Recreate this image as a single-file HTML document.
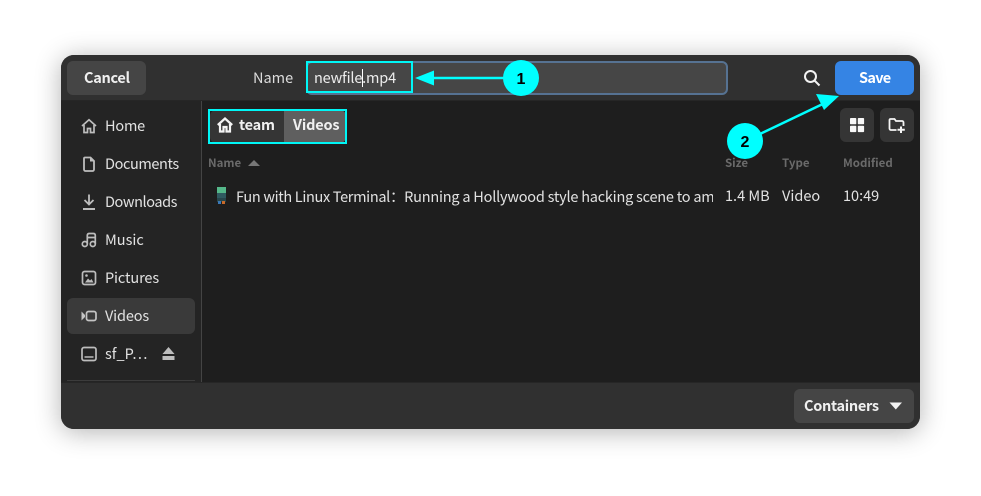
<!DOCTYPE html>
<html><head><meta charset="utf-8">
<style>
html,body{margin:0;padding:0;background:#fff;width:981px;height:496px;overflow:hidden}
body{position:relative;font-family:"Noto Sans CJK SC","Liberation Sans",sans-serif}
.a{position:absolute}
.t{position:absolute;font-size:14.5px;line-height:20px;color:#e2e2e2;white-space:nowrap}
.b{font-weight:700;color:#f0f0f0}
.h{font-size:11.5px;color:#6a6a6a;font-weight:700}
</style></head><body>
<div class="a" style="left:61px;top:55px;width:859px;height:374px;border-radius:13px;background:#1e1e1e;overflow:hidden;box-shadow:0 3px 26px rgba(0,0,0,.3)">
  <div class="a" style="left:0;top:0;width:859px;height:46px;background:#303030;border-bottom:1px solid #262626;box-sizing:border-box"></div>
  <div class="a" style="left:0;top:46px;width:140px;height:281px;background:#242424"></div>
  <div class="a" style="left:140px;top:46px;width:1px;height:281px;background:#444"></div>
  <div class="a" style="left:0;top:327px;width:859px;height:47px;background:#303030;border-top:1px solid #262626;box-sizing:border-box"></div>
</div>

<!-- header -->
<div class="a" style="left:67px;top:61px;width:79px;height:34px;border-radius:6px;background:#454545"></div>
<div class="t b" style="left:84px;top:68px;letter-spacing:-.3px">Cancel</div>
<div class="t" style="left:253px;top:68px;color:#dcdcdc">Name</div>
<div class="a" style="left:306px;top:61px;width:422px;height:34px;box-sizing:border-box;border:2px solid #567292;border-radius:6px;background:#464646"></div>
<div class="t" style="left:314px;top:68px;color:#ededed;letter-spacing:-.18px">newfile.mp4</div>
<div class="a" style="left:362px;top:69px;width:1px;height:18px;background:#fff"></div>
<svg class="a" style="left:803px;top:69px" width="18" height="18" viewBox="0 0 18 18" fill="none" stroke="#f2f2f2" stroke-width="2"><circle cx="7.500" cy="7.500" r="5.500"/><path d="M11.500 11.500L16.500 16.500"/></svg>
<div class="a" style="left:835px;top:61px;width:79px;height:34px;border-radius:6px;background:#3584e4"></div>
<div class="t b" style="left:859px;top:68px;color:#fff;letter-spacing:-.7px">Save</div>

<!-- breadcrumbs -->
<div class="a" style="left:210px;top:110px;width:74px;height:33px;background:#353535;border-radius:6px 0 0 6px"></div>
<div class="a" style="left:284px;top:110px;width:62px;height:33px;background:#5f5f5f;border-radius:0 6px 6px 0"></div>
<svg class="a" style="left:217px;top:117px" width="16" height="16" viewBox="0 0 16 16" fill="none" stroke="#f4f4f4" stroke-width="2.200"><path d="M0.800 8L8 1.500L15.200 8"/><path d="M3 7V14.500H6.500V10H9.500V14.500H13V7"/></svg>
<div class="t b" style="left:239px;top:115px;letter-spacing:-.2px">team</div>
<div class="t b" style="left:293px;top:115px;letter-spacing:-.15px">Videos</div>
<div class="a" style="left:840px;top:108px;width:34px;height:34px;border-radius:6px;background:#353535"></div>
<div class="a" style="left:880px;top:108px;width:34px;height:34px;border-radius:6px;background:#353535"></div>
<svg class="a" style="left:849px;top:117px" width="16" height="16" viewBox="0 0 16 16" fill="#f8f8f8"><rect x="1" y="1" width="6.300" height="6.300" rx=".8"/><rect x="8.800" y="1" width="6.300" height="6.300" rx=".8"/><rect x="1" y="8.800" width="6.300" height="6.300" rx=".8"/><rect x="8.800" y="8.800" width="6.300" height="6.300" rx=".8"/></svg>
<svg class="a" style="left:888px;top:116px" width="18" height="18" viewBox="0 0 18 18" fill="none" stroke="#f6f6f6" stroke-width="1.800"><path d="M8.500 14H3a1.500 1.500 0 0 1-1.500-1.500V4A1 1 0 0 1 2.500 3H6.500L8 5H14a1.500 1.500 0 0 1 1.500 1.500V10"/><path d="M13 10.500V17M9.500 13.800H16.800" stroke-width="2"/></svg>

<!-- column heads -->
<div class="t h" style="left:208px;top:153px">Name</div>
<svg class="a" style="left:248px;top:159px" width="12" height="8"><path d="M0 7L6 1L12 7Z" fill="#777"/></svg>
<div class="t h" style="left:725px;top:153px">Size</div>
<div class="t h" style="left:782px;top:153px">Type</div>
<div class="t h" style="left:843px;top:153px">Modified</div>

<!-- row -->
<svg class="a" style="left:217px;top:187px" width="9" height="17"><rect width="9" height="6" fill="#55b88a"/><rect y="6" width="9" height="5" fill="#2f5a60"/><rect y="11" width="9" height="4" fill="#27464c"/><rect x="1" y="14" width="3" height="3" fill="#3a78b8"/><rect x="5" y="14" width="3" height="3" fill="#c86a2a"/></svg>
<div class="t" style="left:236px;top:187px;width:477px;overflow:hidden"><span style="letter-spacing:-.33px">Fun with Linux Terminal：</span><span style="letter-spacing:-.22px">Running a Hollywood style hacking scene to amuse</span></div>
<div class="t" style="left:725px;top:186px">1.4 MB</div>
<div class="t" style="left:782px;top:186px">Video</div>
<div class="t" style="left:843px;top:186px">10:49</div>

<!-- sidebar -->
<div class="a" style="left:67px;top:298px;width:128px;height:36px;border-radius:6px;background:#3a3a3a"></div>
<svg class="a" style="left:81px;top:118px" width="16" height="16" viewBox="0 0 16 16" fill="none" stroke="#bdbdbd" stroke-width="1.700"><path d="M1 8L8 1.800L15 8"/><path d="M3 7V14.500H6.500V10.500H9.500V14.500H13V7"/></svg>
<svg class="a" style="left:81px;top:156px" width="16" height="16" viewBox="0 0 16 16" fill="none" stroke="#bdbdbd" stroke-width="1.800"><path d="M4 1.500H9.500L13 5V13.500A1.500 1.500 0 0 1 11.500 15H4.500A1.500 1.500 0 0 1 3 13.500V2.500A1 1 0 0 1 4 1.500Z"/><path d="M9.500 1.500V5H13" fill="#bdbdbd" stroke-width="1"/></svg>
<svg class="a" style="left:81px;top:194px" width="16" height="16" viewBox="0 0 16 16" fill="none" stroke="#bdbdbd" stroke-width="1.800"><path d="M8 0.500V10M3.500 6L8 10.500L12.500 6"/><path d="M2 15H14" stroke-width="2"/></svg>
<svg class="a" style="left:81px;top:232px" width="16" height="16" viewBox="0 0 16 16" fill="none" stroke="#bdbdbd" stroke-width="1.700"><circle cx="3.800" cy="12" r="2.500"/><circle cx="11.800" cy="12" r="2.500"/><path d="M6.300 12V3.500Q6.300 1.500 8.300 1.500H12.300Q14.300 1.500 14.300 3.500V12M6.300 5.500H14.300"/></svg>
<svg class="a" style="left:81px;top:270px" width="16" height="16" viewBox="0 0 16 16" fill="none" stroke="#bdbdbd" stroke-width="1.700"><rect x="1.500" y="1.500" width="13" height="13" rx="2"/><path d="M4 12.500L7 8.500L9 10.500L10.500 9L12.500 12.500Z" fill="#bdbdbd" stroke="none"/><circle cx="5.500" cy="5.500" r="1.300" fill="#bdbdbd" stroke="none"/></svg>
<svg class="a" style="left:81px;top:308px" width="16" height="16" viewBox="0 0 16 16" fill="none" stroke="#c4c4c4" stroke-width="1.700"><rect x="5.500" y="3.500" width="9.500" height="9" rx="2"/><path d="M0.500 3.500L4 7V9L0.500 12.500Z" fill="#c4c4c4" stroke="none"/></svg>
<svg class="a" style="left:81px;top:346px" width="16" height="16" viewBox="0 0 16 16" fill="none" stroke="#bdbdbd" stroke-width="1.700"><rect x="1" y="1.500" width="14" height="13" rx="2"/><path d="M3.500 11H12.500" stroke-width="1.500"/></svg>
<div class="t" style="left:105px;top:116px;letter-spacing:-.2px">Home</div>
<div class="t" style="left:105px;top:154px;letter-spacing:-.4px">Documents</div>
<div class="t" style="left:105px;top:192px;letter-spacing:-.42px">Downloads</div>
<div class="t" style="left:105px;top:230px">Music</div>
<div class="t" style="left:105px;top:268px;letter-spacing:-.12px">Pictures</div>
<div class="t" style="left:105px;top:306px;letter-spacing:-.15px">Videos</div>
<div class="t" style="left:105px;top:344px">sf_P…</div>
<svg class="a" style="left:162px;top:347px" width="13" height="14"><path d="M6.500 0L12.500 7H0.500Z" fill="#bdbdbd"/><rect x="0.500" y="9" width="12" height="4" fill="#bdbdbd"/></svg>
<div class="a" style="left:67px;top:380px;width:128px;height:1px;background:#3c3c3c"></div>

<!-- bottom -->
<div class="a" style="left:794px;top:389px;width:120px;height:34px;border-radius:6px;background:#454545"></div>
<div class="t b" style="left:804px;top:396px;letter-spacing:-.3px">Containers</div>
<svg class="a" style="left:889px;top:402px" width="14" height="8"><path d="M0.500 0.500H13L6.800 7.500Z" fill="#f2f2f2"/></svg>

<!-- annotations -->
<div class="a" style="left:306px;top:61px;width:107px;height:32px;box-sizing:border-box;border:2px solid #00f6f6"></div>
<div class="a" style="left:208px;top:109px;width:139px;height:35px;box-sizing:border-box;border:2px solid #00f6f6"></div>
<svg class="a" style="left:0;top:0" width="981" height="496">
  <path d="M425 78H505" stroke="#00ffff" stroke-width="2.500"/>
  <path d="M415 78L434 70.500V85.500Z" fill="#00ffff"/>
  <path d="M760 134L828 101.500" stroke="#00ffff" stroke-width="2.500"/>
  <path d="M839 96L824 110L816 94Z" fill="#00ffff"/>
  <circle cx="521" cy="78" r="18" fill="#00ffff"/>
  <circle cx="745" cy="141" r="18" fill="#00ffff"/>
  <text x="521" y="84" text-anchor="middle" font-family="Liberation Sans, sans-serif" font-weight="700" font-size="16" fill="#000">1</text>
  <text x="745" y="147" text-anchor="middle" font-family="Liberation Sans, sans-serif" font-weight="700" font-size="16" fill="#000">2</text>
</svg>
</body></html>
